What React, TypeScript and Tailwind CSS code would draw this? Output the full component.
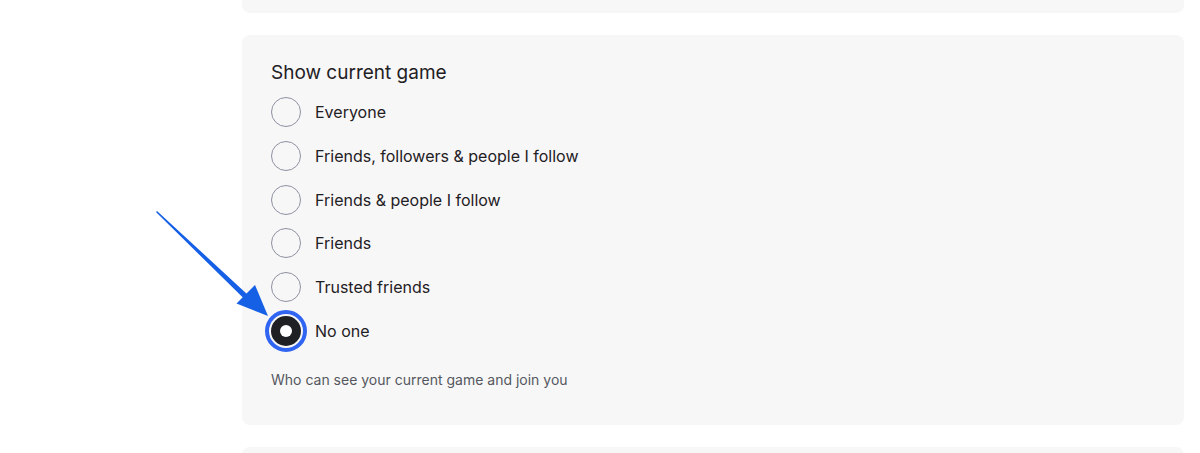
const options = [
  'Everyone',
  'Friends, followers & people I follow',
  'Friends & people I follow',
  'Friends',
  'Trusted friends',
  'No one',
];

function Radio({ checked }: { checked: boolean }) {
  if (checked) {
    return (
      <span className="w-[30px] h-[30px] rounded-full bg-[#1f2024] flex items-center justify-center outline-4 outline-offset-2 outline-[#3065f2] shrink-0">
        <span className="w-[12px] h-[12px] rounded-full bg-white" />
      </span>
    );
  }
  return <span className="w-[30px] h-[30px] rounded-full border-[1.5px] border-[#8e91a1] shrink-0" />;
}

export default function App() {
  const selected = 'No one';

  return (
    <div
      className="relative w-[1200px] h-[453px] bg-white overflow-hidden text-[#1f2024]"
      style={{ fontFamily: 'Inter, "Noto Sans", sans-serif' }}
    >
      <div className="flex">
        <div className="w-[242px] shrink-0" />
        <div className="w-[942px] flex flex-col gap-[22px]">
          {/* previous card tail */}
          <div className="h-[13px] rounded-b-lg bg-[#f7f7f7]" />

          {/* Show current game */}
          <section className="h-[390px] rounded-lg bg-[#f7f7f7] pl-[29px] pt-[25px]">
            <h2 className="text-[19px] leading-[25px] font-normal">Show current game</h2>
            <div className="mt-[12px] flex flex-col gap-[13.8px]">
              {options.map((o) => (
                <label key={o} className="flex items-center gap-[14px] h-[30px]">
                  <Radio checked={o === selected} />
                  <span className="text-[16px] leading-[20px]">{o}</span>
                </label>
              ))}
            </div>
            <p className="mt-[25px] text-[14px] leading-[18px] text-[#55575f]">
              Who can see your current game and join you
            </p>
          </section>

          <div className="h-[40px] rounded-t-lg bg-[#f7f7f7]" />
        </div>
      </div>

      {/* annotation arrow */}
      <svg className="absolute left-0 top-0 pointer-events-none" width="1200" height="453" viewBox="0 0 1200 453">
        <path d="M157 212 L248 296 L245.5 299 Z" fill="#1660e6" stroke="#1660e6" strokeWidth="1.6" strokeLinejoin="round" />
        <polygon points="236.5,303.5 255,285 268,316" fill="#1660e6" />
      </svg>
    </div>
  );
}
